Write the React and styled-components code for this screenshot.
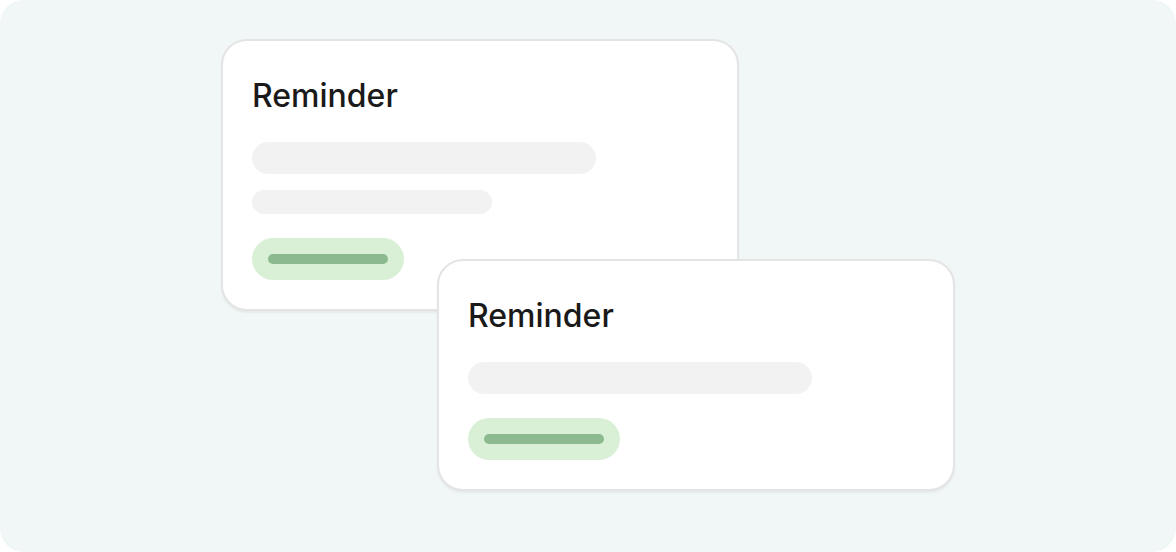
import React from "react";
import styled, { createGlobalStyle } from "styled-components";

const GlobalStyle = createGlobalStyle`
  html, body {
    margin: 0;
    padding: 0;
    background: #ffffff;
  }
  body {
    font-family: Inter, "Noto Sans", sans-serif;
  }
`;

function ReminderCard({ lines, className }) {
  return (
    <Card className={className}>
      <Title>Reminder</Title>
      <Lines>
        {lines.map((w, i) => (
          <Line key={i} $width={w} $tall={i === 0} />
        ))}
      </Lines>
      <Pill>
        <PillBar />
      </Pill>
    </Card>
  );
}

function App() {
  return (
    <>
      <GlobalStyle />
      <Stage>
        <Canvas>
          <ReminderCard lines={[344, 240]} />
          <FrontCard lines={[344]} />
        </Canvas>
      </Stage>
    </>
  );
}

const Stage = styled.div`
  width: 1176px;
  height: 552px;
  box-sizing: border-box;
  background: #f1f6f6;
  border-radius: 24px;
  padding: 39px 0 0 221px;
  overflow: hidden;
`;

const Canvas = styled.div`
  position: relative;
  width: 518px;
`;

const Card = styled.div`
  box-sizing: border-box;
  width: 518px;
  background: #ffffff;
  border: 2px solid #e4e4e4;
  border-radius: 26px;
  box-shadow: 0 2px 2px rgba(0, 0, 0, 0.05);
  padding: 29px;
  display: flex;
  flex-direction: column;
  align-items: flex-start;
`;

const FrontCard = styled(ReminderCard)`
  position: absolute;
  left: 216px;
  top: 220px;
`;

const Title = styled.h2`
  margin: 6px 0 0;
  font-size: 32px;
  line-height: 40px;
  font-weight: 500;
  color: #1a1a1a;
  letter-spacing: 0;
`;

const Lines = styled.div`
  margin-top: 26px;
  display: flex;
  flex-direction: column;
  gap: 16px;
`;

const Line = styled.div`
  width: ${(p) => p.$width}px;
  height: ${(p) => (p.$tall ? 32 : 24)}px;
  border-radius: 999px;
  background: #f2f2f2;
`;

const Pill = styled.div`
  margin-top: 24px;
  width: 152px;
  height: 42px;
  box-sizing: border-box;
  padding: 0 16px;
  border-radius: 999px;
  background: #d9f0d7;
  display: flex;
  align-items: center;
`;

const PillBar = styled.div`
  flex: 1;
  height: 10px;
  border-radius: 999px;
  background: #8cba8e;
`;

export default App;
